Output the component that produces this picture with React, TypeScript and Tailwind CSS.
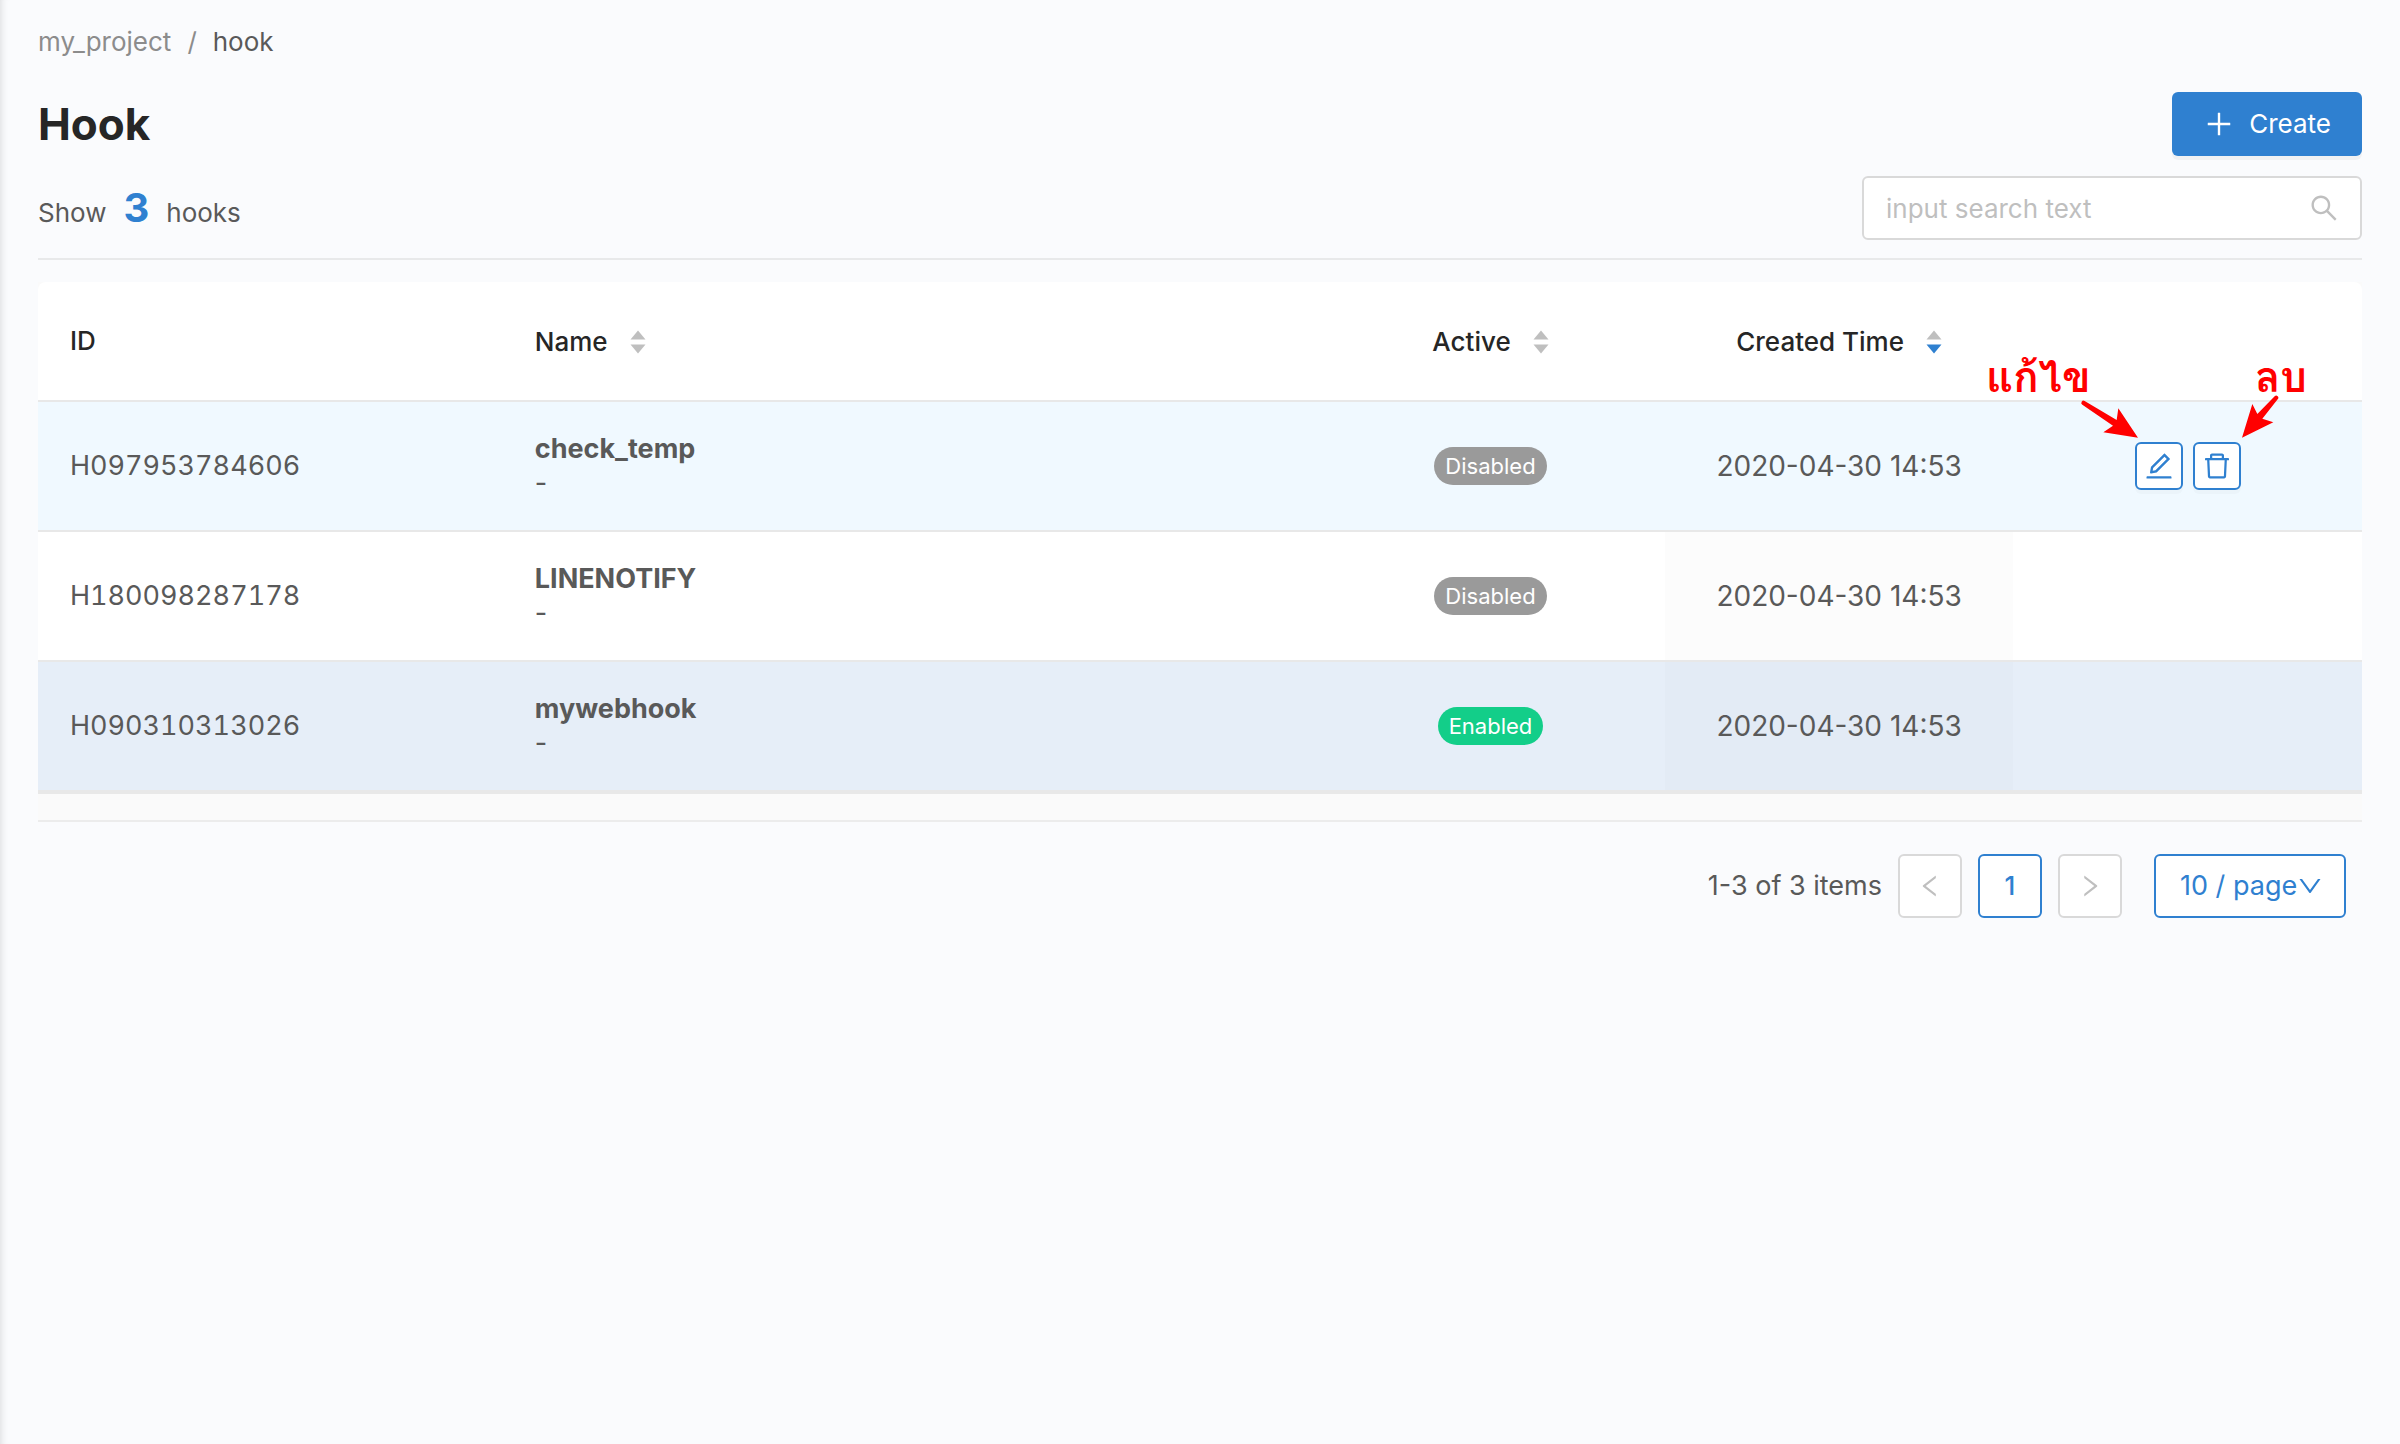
import React from "react";
import {
  AiOutlineDelete,
  AiOutlineDown,
  AiOutlineEdit,
  AiOutlineLeft,
  AiOutlinePlus,
  AiOutlineRight,
  AiOutlineSearch,
} from "react-icons/ai";

type Hook = {
  id: string;
  name: string;
  enabled: boolean;
  created: string;
  row: string;
  sorted: string;
};

const hooks: Hook[] = [
  {
    id: "H097953784606",
    name: "check_temp",
    enabled: false,
    created: "2020-04-30 14:53",
    row: "bg-[#f0f9ff]",
    sorted: "",
  },
  {
    id: "H180098287178",
    name: "LINENOTIFY",
    enabled: false,
    created: "2020-04-30 14:53",
    row: "bg-white",
    sorted: "bg-black/[0.01]",
  },
  {
    id: "H090310313026",
    name: "mywebhook",
    enabled: true,
    created: "2020-04-30 14:53",
    row: "bg-[#e6eef8]",
    sorted: "bg-black/[0.01]",
  },
];

function Sorter({ descending = false }: { descending?: boolean }) {
  return (
    <svg viewBox="0 0 16 24" className="h-6 w-4" aria-hidden="true">
      <path d="M8 0.5 15.5 9.5H0.5Z" fill="#bfbfbf" />
      <path d="M8 23.5 15.5 14.5H0.5Z" fill={descending ? "#2f80d0" : "#bfbfbf"} />
    </svg>
  );
}

function SortHeader({ label, descending }: { label: string; descending?: boolean }) {
  return (
    <button type="button" className="inline-flex items-center gap-[22px] align-middle font-medium">
      {label}
      <Sorter descending={descending} />
    </button>
  );
}

function StatusBadge({ enabled }: { enabled: boolean }) {
  return enabled ? (
    <span className="mx-auto block w-fit rounded-full bg-[#13ce89] px-[11px] text-[22px] leading-[38px] text-white">
      Enabled
    </span>
  ) : (
    <span className="mx-auto block w-fit rounded-full bg-[#9a9a9a] px-[11px] text-[22px] leading-[38px] text-white">
      Disabled
    </span>
  );
}

const iconButton =
  "flex size-12 items-center justify-center rounded-md border-2 border-[#2f80d0] bg-white text-[32px] text-[#2f80d0] shadow-[0_4px_0_rgba(0,0,0,0.02)]";

const annotation =
  "absolute bottom-[85px] font-['Waree','Loma','Noto_Sans_Thai_Looped','Noto_Sans_Thai',sans-serif] text-[42px] leading-[56px] font-bold whitespace-nowrap text-[#ff0000]";

function RowActions() {
  return (
    <div className="relative mx-auto flex w-fit gap-2.5">
      <button type="button" aria-label="Edit" className={iconButton}>
        <AiOutlineEdit />
      </button>
      <button type="button" aria-label="Delete" className={iconButton}>
        <AiOutlineDelete />
      </button>
      <span className={`${annotation} right-[150px]`}>แก้ไข</span>
      <svg
        viewBox="390 204 186 126"
        className="absolute bottom-[50px] -left-14 h-[42px] w-[62px]"
        fill="#ff0000"
        aria-hidden="true"
      >
        <path d="M407 213 503 270 508 235 567 323 463 307 492 287 400 224A6 6 0 0 1 407 213Z" />
      </svg>
      <span className={`${annotation} left-[120px]`}>ลบ</span>
      <svg
        viewBox="870 192 120 138"
        className="absolute bottom-[50px] left-[104px] h-[46px] w-10"
        fill="#ff0000"
        aria-hidden="true"
      >
        <path d="M977 199 925 252 910 222 879 323 973 277 940 266 986 208A6 6 0 0 0 977 199Z" />
      </svg>
    </div>
  );
}

const pageButton = "flex size-16 items-center justify-center rounded-md border-2 bg-white";

export default function App() {
  return (
    <main className="min-h-screen bg-[#fafbfd] px-[38px] pt-5 font-['Inter','Noto_Sans_Thai',sans-serif] text-[26px] leading-[44px] text-[#595959] shadow-[inset_8px_0_8px_-8px_rgba(0,0,0,0.16)]">
      <nav aria-label="Breadcrumb" className="flex gap-4">
        <a href="#project" className="text-[#8c8c8c]">
          my_project
        </a>
        <span className="text-[#8c8c8c]">/</span>
        <span>hook</span>
      </nav>

      <header className="mt-7 flex h-16 items-center justify-between">
        <h1 className="text-[44px] leading-[64px] font-bold text-[#262626]">Hook</h1>
        <button
          type="button"
          className="flex h-16 items-center gap-3.5 rounded-md bg-[#2f80d0] px-[31px] text-white shadow-[0_4px_0_rgba(0,0,0,0.04)]"
        >
          <AiOutlinePlus className="size-8" />
          Create
        </button>
      </header>

      <div className="mt-5 flex items-center justify-between">
        <p className="flex items-baseline pt-1">
          Show
          <strong className="mx-[17px] text-[40px] font-bold text-[#2f80d0]">3</strong>
          hooks
        </p>
        <label className="flex h-16 w-[500px] items-center rounded-md border-2 border-[#d9d9d9] bg-white pr-5 pl-[22px] text-[#bfbfbf]">
          <input
            type="search"
            aria-label="Search hooks"
            placeholder="input search text"
            className="min-w-0 flex-1 bg-transparent pt-0.5 outline-none placeholder:text-[#bfbfbf]"
          />
          <AiOutlineSearch className="size-8" />
        </label>
      </div>

      <hr className="mt-[18px] border-t-2 border-[#e8e9ea]" />

      <div className="mt-[22px] border-b-2 border-[#ececec] bg-[#fafafa] pb-[26px]">
        <table className="w-full table-fixed border-separate border-spacing-0 overflow-hidden rounded-t-lg border-b-2 border-[#e8e8e8] bg-white">
          <colgroup>
            <col className="w-[20%]" />
            <col className="w-[35%]" />
            <col className="w-[15%]" />
            <col className="w-[15%]" />
            <col className="w-[15%]" />
          </colgroup>
          <thead>
            <tr className="h-[120px] text-[#262626]">
              <th scope="col" className="border-b-2 border-[#e8e8e8] px-8 text-left font-medium">
                ID
              </th>
              <th scope="col" className="border-b-2 border-[#e8e8e8] px-8 text-left">
                <SortHeader label="Name" />
              </th>
              <th scope="col" className="border-b-2 border-[#e8e8e8]">
                <SortHeader label="Active" />
              </th>
              <th scope="col" className="border-b-2 border-[#e8e8e8]" aria-sort="descending">
                <SortHeader label="Created Time" descending />
              </th>
              <th scope="col" className="border-b-2 border-[#e8e8e8]" aria-label="Actions" />
            </tr>
          </thead>
          <tbody>
            {hooks.map((hook, index) => (
              <tr key={hook.id} className={`h-[130px] ${hook.row}`}>
                <td className="border-b-2 border-[#e8e8e8] px-8 text-[27px] tabular-nums">
                  {hook.id}
                </td>
                <td className="border-b-2 border-[#e8e8e8] px-8 text-[27px] leading-[34px]">
                  <strong className="block font-bold">{hook.name}</strong>
                  <span className="block">-</span>
                </td>
                <td className="border-b-2 border-[#e8e8e8] text-center">
                  <StatusBadge enabled={hook.enabled} />
                </td>
                <td className={`border-b-2 border-[#e8e8e8] text-center text-[28px] ${hook.sorted}`}>
                  {hook.created}
                </td>
                <td className="border-b-2 border-[#e8e8e8]">{index === 0 && <RowActions />}</td>
              </tr>
            ))}
          </tbody>
        </table>
      </div>

      <nav aria-label="Pagination" className="mt-8 flex items-center justify-end gap-4 pr-4">
        <span className="text-[27px]">1-3 of 3 items</span>
        <button
          type="button"
          disabled
          aria-label="Previous page"
          className={`${pageButton} border-[#d9d9d9] text-[#bfbfbf]`}
        >
          <AiOutlineLeft className="size-7" />
        </button>
        <button
          type="button"
          aria-current="page"
          className={`${pageButton} border-[#2f80d0] font-medium text-[#2f80d0]`}
        >
          1
        </button>
        <button
          type="button"
          disabled
          aria-label="Next page"
          className={`${pageButton} border-[#d9d9d9] text-[#bfbfbf]`}
        >
          <AiOutlineRight className="size-7" />
        </button>
        <div className="ml-4 grid w-48 items-center text-[#2f80d0]">
          <select
            aria-label="Page size"
            className="col-start-1 row-start-1 h-16 w-full appearance-none rounded-md border-2 border-[#2f80d0] bg-white pl-6 text-[27px] outline-none"
          >
            <option>10 / page</option>
            <option>20 / page</option>
            <option>50 / page</option>
          </select>
          <AiOutlineDown className="pointer-events-none col-start-1 row-start-1 mr-[22px] size-7 justify-self-end" />
        </div>
      </nav>
    </main>
  );
}
